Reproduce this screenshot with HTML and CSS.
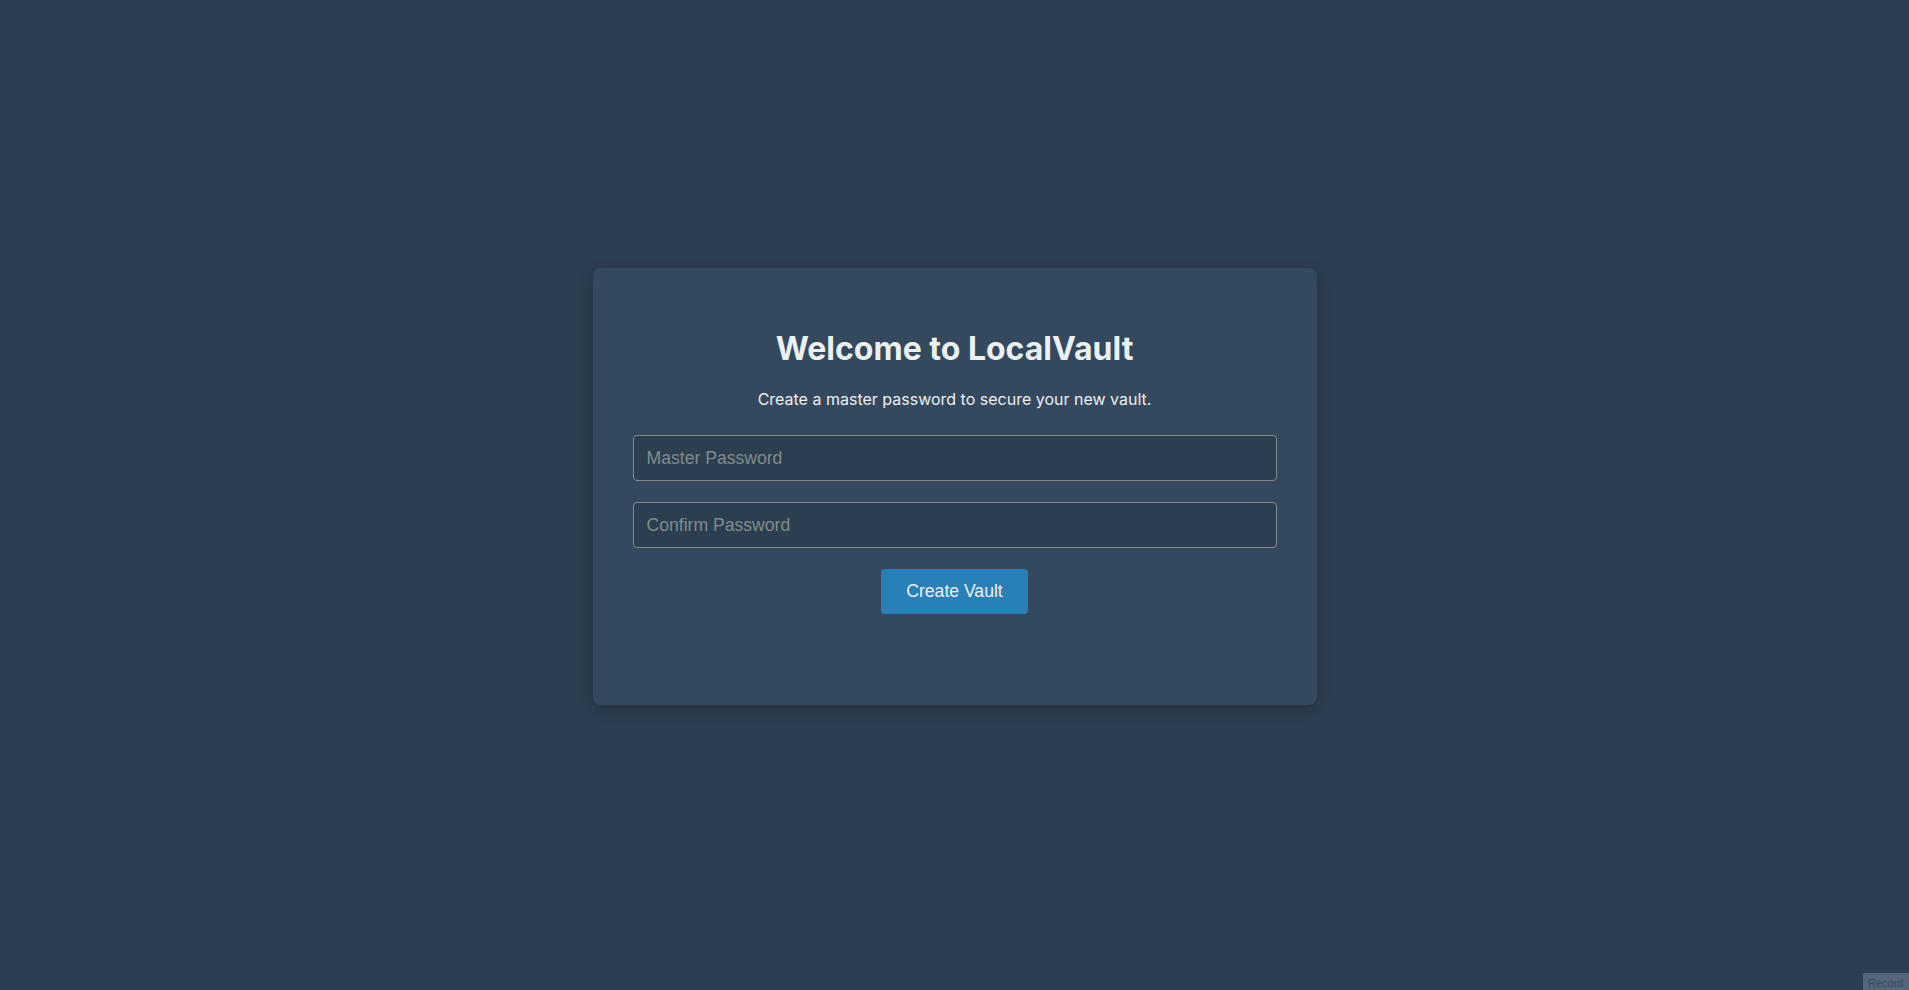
FILE: index.html
```html
<!DOCTYPE html>
<html lang="en">
<head>
<meta charset="utf-8">
<title>LocalVault</title>
<link rel="stylesheet" href="styles.css">
</head>
<body>
<main class="screen">
  <section class="card">
    <h1 class="title">Welcome to LocalVault</h1>
    <p class="subtitle">Create a master password to secure your new vault.</p>
    <form class="form">
      <input class="field" type="password" placeholder="Master Password">
      <input class="field" type="password" placeholder="Confirm Password">
      <button class="btn" type="button">Create Vault</button>
    </form>
  </section>
</main>
<div class="record-badge">Record</div>
</body>
</html>
```

FILE: styles.css
```css
* { box-sizing: border-box; }
html, body { margin: 0; padding: 0; }
body {
  background: #2c3e50;
  font-family: Inter, "Liberation Sans", sans-serif;
  color: #ecf0f1;
  height: 100vh;
  overflow: hidden;
}
.screen {
  height: 100%;
  display: flex;
  align-items: center;
  justify-content: center;
  padding-bottom: 17px;
}
.card {
  width: 724px;
  height: 437px;
  background: #34495e;
  border-radius: 8px;
  box-shadow: 0 4px 14px rgba(0, 0, 0, 0.22);
  padding: 62px 40px 40px;
  display: flex;
  flex-direction: column;
  align-items: center;
}
.title {
  margin: 0;
  font-size: 32px;
  font-weight: 700;
  line-height: 38px;
  color: #ecf0f1;
}
.subtitle {
  margin: 22px 0 0;
  font-size: 16px;
  line-height: 19px;
  color: #ecf0f1;
}
.form {
  width: 100%;
  margin-top: 26px;
  display: flex;
  flex-direction: column;
  align-items: center;
  gap: 21px;
}
.field {
  width: 100%;
  height: 46px;
  background: #2c3e50;
  border: 1px solid #7f8c8d;
  border-radius: 4px;
  padding: 0 13px;
  font-family: "Liberation Sans", Arial, sans-serif;
  font-size: 17.6px;
  color: #ecf0f1;
  outline: none;
}
.field::placeholder { color: #7f8c8d; }
.btn {
  height: 45px;
  padding: 0 25px;
  background: #2980b9;
  border: none;
  border-radius: 4px;
  color: #ecf0f1;
  font-family: "Liberation Sans", Arial, sans-serif;
  font-size: 17.6px;
  cursor: pointer;
}
.record-badge {
  position: fixed;
  left: 1863px;
  top: 973px;
  width: 60px;
  height: 24px;
  background: #56667a;
  color: #34495e;
  font-family: "Liberation Sans", Arial, sans-serif;
  font-size: 11px;
  padding: 4px 0 0 5px;
}
```
